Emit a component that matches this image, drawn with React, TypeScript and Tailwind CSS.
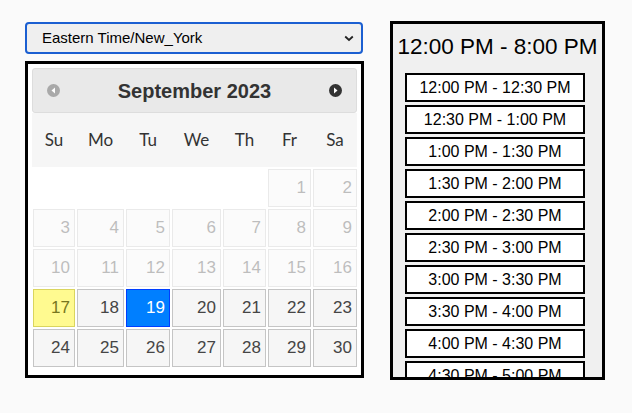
import React from 'react';

const dayNames = ['Su', 'Mo', 'Tu', 'We', 'Th', 'Fr', 'Sa'];

const weeks: (number | null)[][] = [
  [null, null, null, null, null, 1, 2],
  [3, 4, 5, 6, 7, 8, 9],
  [10, 11, 12, 13, 14, 15, 16],
  [17, 18, 19, 20, 21, 22, 23],
  [24, 25, 26, 27, 28, 29, 30],
];

const slots = [
  '12:00 PM - 12:30 PM',
  '12:30 PM - 1:00 PM',
  '1:00 PM - 1:30 PM',
  '1:30 PM - 2:00 PM',
  '2:00 PM - 2:30 PM',
  '2:30 PM - 3:00 PM',
  '3:00 PM - 3:30 PM',
  '3:30 PM - 4:00 PM',
  '4:00 PM - 4:30 PM',
  '4:30 PM - 5:00 PM',
];

const TODAY = 17;
const SELECTED = 19;

function CircleArrow({ dir, color }: { dir: 'left' | 'right'; color: string }) {
  return (
    <svg width="13" height="13" viewBox="0 0 13 13">
      <circle cx="6.5" cy="6.5" r="6.5" fill={color} />
      {dir === 'left' ? (
        <path d="M8 3.5 L4.5 6.5 L8 9.5 Z" fill="#fff" />
      ) : (
        <path d="M5 3.5 L8.5 6.5 L5 9.5 Z" fill="#fff" />
      )}
    </svg>
  );
}

function DayCell({ day }: { day: number | null }) {
  if (day === null) return <div />;

  let cls = 'border-[#c5c5c5] bg-[#f6f6f6] text-[#454545]';
  if (day < TODAY) cls = 'border-[#c5c5c5] bg-[#f6f6f6] text-[#454545] opacity-35';
  if (day === TODAY) cls = 'border-[#dad55e] bg-[#fffa90] text-[#777620]';
  if (day === SELECTED) cls = 'border-[#003eff] bg-[#007fff] text-white';

  return (
    <div className={`h-[38px] border flex items-center justify-end pr-[4px] text-[17px] ${cls}`}>
      {day}
    </div>
  );
}

export default function App() {
  return (
    <div className="min-h-screen bg-[#fafafa] flex gap-[26px] pl-[25px] pt-[21px] font-['Liberation_Sans',Arial,sans-serif]">
      <div className="w-[339px] flex flex-col">
        {/* timezone select */}
        <div className="mt-[1px] h-[32px] w-[338px] border-2 border-[#1b5fd1] rounded-[4px] bg-[#efefef] flex items-center justify-between pl-[15px] pr-[7px] text-[15px] text-black">
          <span>Eastern Time/New_York</span>
          <svg width="10" height="7" viewBox="0 0 10 7">
            <path d="M1.2 1.5 L5 5 L8.8 1.5" fill="none" stroke="#222" strokeWidth="1.8" />
          </svg>
        </div>

        {/* calendar */}
        <div className="mt-[7px] border-[3px] border-black bg-white px-[4px] pt-[4px] pb-[8px]">
          <div className="h-[45px] rounded-[3px] border border-[#dddddd] bg-[#e9e9e9] flex items-center justify-between px-[14px]">
            <CircleArrow dir="left" color="#a9a9a9" />
            <span className="text-[20px] font-bold text-[#333333]">September 2023</span>
            <CircleArrow dir="right" color="#333333" />
          </div>

          <div className="h-[54px] bg-[#f6f6f6] pl-[1px] grid grid-cols-[42px_47px_44px_49px_43px_43px_44px] gap-x-[2px] items-center">
            {dayNames.map(d => (
              <div key={d} className="text-center text-[17px] text-[#333333] font-['Lato',sans-serif]">
                {d}
              </div>
            ))}
          </div>

          <div className="mt-[2px] pl-[1px] grid grid-cols-[42px_47px_44px_49px_43px_43px_44px] gap-[2px]">
            {weeks.flat().map((d, i) => (
              <DayCell key={i} day={d} />
            ))}
          </div>
        </div>
      </div>

      {/* time slots */}
      <div className="w-[215px] h-[359px] border-[3px] border-black bg-[#f0f0f0] overflow-hidden">
        <div className="h-[46px] flex items-center justify-center text-[22.5px] text-black">
          12:00 PM - 8:00 PM
        </div>
        <div className="mt-[3px] pl-[12px] flex flex-col gap-[3px]">
          {slots.map(s => (
            <div
              key={s}
              className="w-[180px] h-[29px] shrink-0 border-2 border-black bg-white flex items-center justify-center text-[16px] text-black"
            >
              {s}
            </div>
          ))}
        </div>
      </div>
    </div>
  );
}
